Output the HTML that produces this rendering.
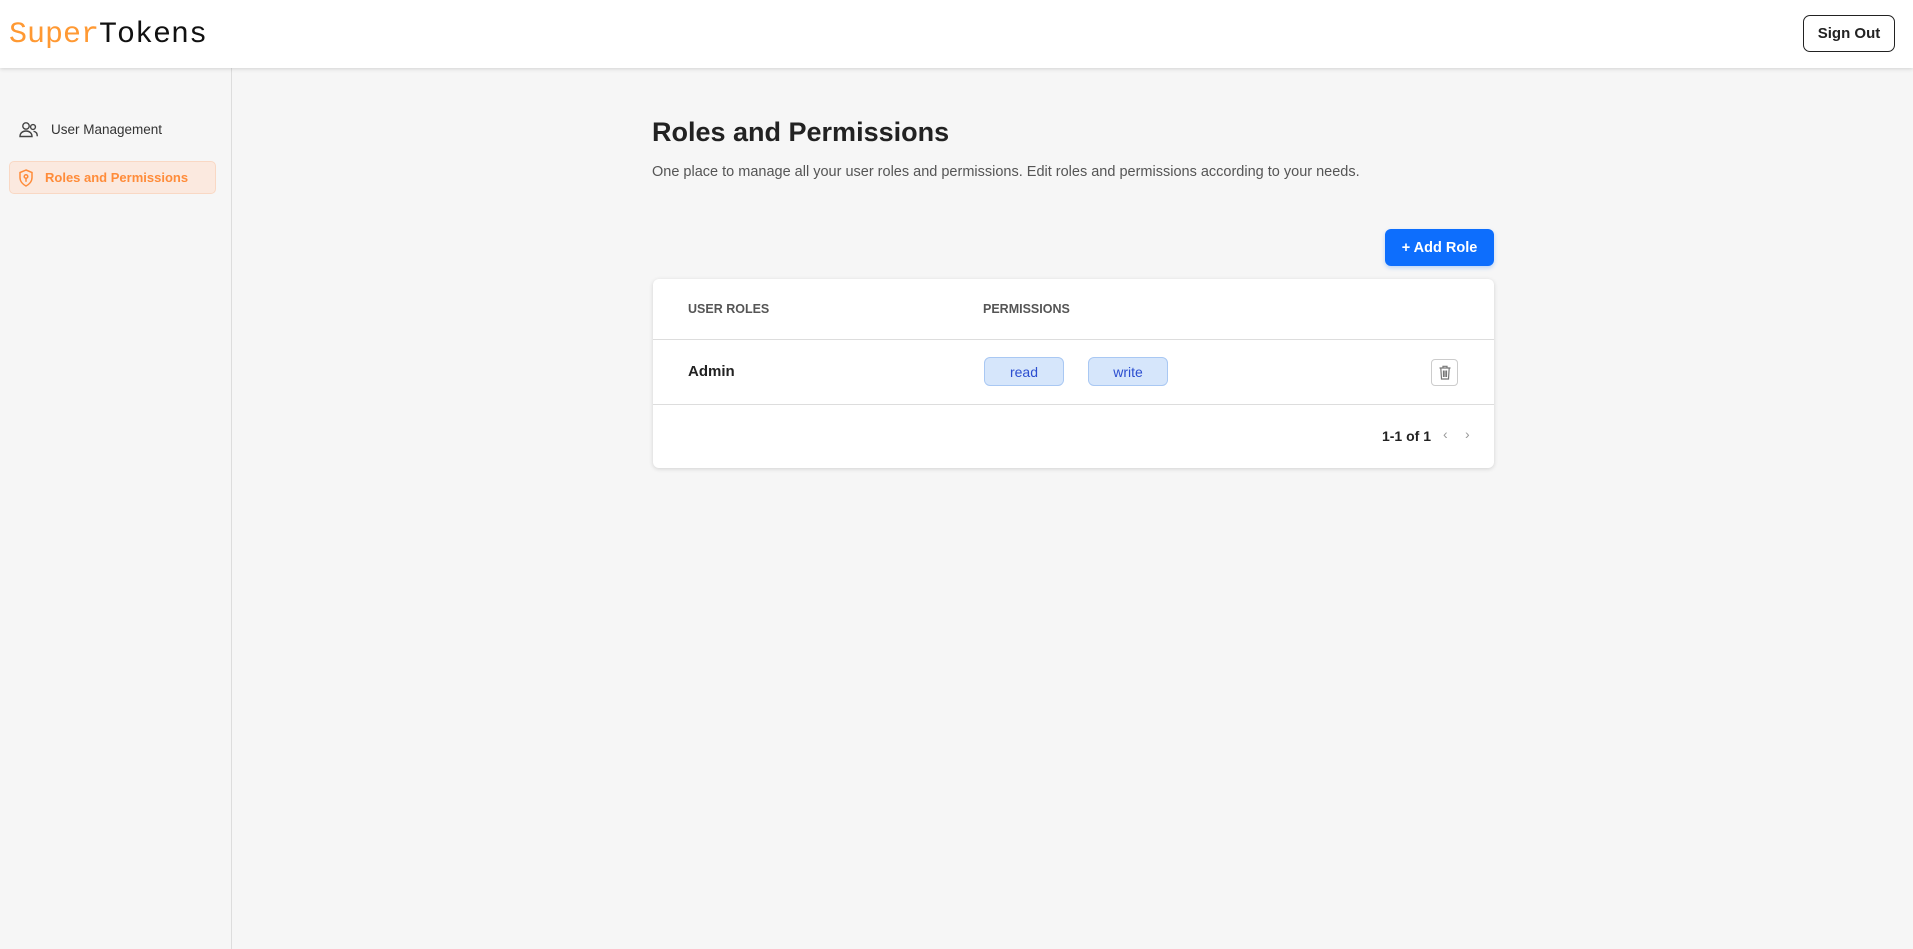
<!DOCTYPE html>
<html><head><meta charset="utf-8"><style>
*{box-sizing:border-box;margin:0;padding:0}
body{width:1913px;height:949px;background:#f6f6f6;font-family:"Liberation Sans",sans-serif;position:relative;overflow:hidden;color:#222}
.hdr{position:absolute;left:0;top:0;width:1913px;height:68px;background:#fff;box-shadow:0 1px 4px rgba(0,0,0,.15);z-index:2}
.logo{position:absolute;left:9px;top:17px;font-family:"Liberation Mono",monospace;font-size:30px;line-height:36px}
.logo .o{color:#ff9933}.logo .b{color:#111}
.so{position:absolute;left:1803px;top:15px;width:92px;height:37px;border:1px solid #222;border-radius:7px;font-size:15px;font-weight:bold;display:flex;align-items:center;justify-content:center;color:#222}
.side{position:absolute;left:0;top:68px;width:232px;height:881px;border-right:1px solid #ddd}
.um{position:absolute;left:19px;top:121px;display:flex;align-items:center;font-size:13.5px;color:#333}
.rp{position:absolute;left:9px;top:161px;width:207px;height:33px;background:#fbe9df;border:1px solid #f9d8c4;border-radius:5px;display:flex;align-items:center;padding-left:8px;font-size:13px;font-weight:bold;color:#ff8c3a}
h1{position:absolute;left:652px;top:117px;font-size:27px;font-weight:bold;color:#222}
.sub{position:absolute;left:652px;top:164px;font-size:14.5px;color:#555}
.add{position:absolute;left:1385px;top:229px;width:109px;height:37px;background:#0d6efd;border-radius:6px;color:#fff;font-weight:bold;font-size:14.5px;display:flex;align-items:center;justify-content:center;box-shadow:0 2px 4px rgba(13,110,253,.25)}
.card{position:absolute;left:653px;top:279px;width:841px;height:189px;background:#fff;border-radius:6px;box-shadow:0 1px 4px rgba(0,0,0,.15)}
.th{position:absolute;top:23px;font-size:12.5px;font-weight:bold;color:#555}
.l1{position:absolute;left:0;top:60px;width:100%;border-top:1px solid #ddd}
.l2{position:absolute;left:0;top:125px;width:100%;border-top:1px solid #ddd}
.admin{position:absolute;left:35px;top:84px;font-size:15px;font-weight:bold;color:#222}
.chip{position:absolute;top:78px;width:80px;height:29px;background:#d6e6fb;border:1px solid #a9c8f3;border-radius:6px;color:#2c4ed0;font-size:14px;display:flex;align-items:center;justify-content:center}
.trash{position:absolute;left:778px;top:80px;width:27px;height:27px;border:1px solid #ccc;border-radius:4px;display:flex;align-items:center;justify-content:center}
.pg{position:absolute;right:63px;top:149px;font-size:14px;font-weight:bold;color:#222}
.ar{position:absolute;top:147px;font-size:14px;color:#999}
</style></head><body>
<div class="hdr"><div class="logo"><span class="o">Super</span><span class="b">Tokens</span></div><div class="so">Sign Out</div></div>
<div class="side"></div>
<div class="um"><svg width="19" height="17" viewBox="0 0 19 17" fill="none" stroke="#444" stroke-width="1.4"><circle cx="7" cy="5" r="3.2"/><path d="M1 15.5c0-3.5 2.7-5.5 6-5.5s6 2 6 5.5z"/><circle cx="14" cy="6" r="2.4"/><path d="M14.5 10.3c2.3.3 3.8 2 3.8 5"/></svg><span style="margin-left:13px">User Management</span></div>
<div class="rp"><svg width="16" height="18" viewBox="0 0 16 18" fill="none" stroke="#ff8c3a" stroke-width="1.5"><path d="M8 1l6 2.5v5c0 4-3 7-6 8.5-3-1.5-6-4.5-6-8.5v-5z"/><circle cx="8" cy="7.5" r="1.8"/><path d="M8 9.3v3.5"/></svg><span style="margin-left:11px">Roles and Permissions</span></div>
<h1>Roles and Permissions</h1>
<div class="sub">One place to manage all your user roles and permissions. Edit roles and permissions according to your needs.</div>
<div class="add">+ Add Role</div>
<div class="card">
<div class="th" style="left:35px">USER ROLES</div>
<div class="th" style="left:330px">PERMISSIONS</div>
<div class="l1"></div>
<div class="admin">Admin</div>
<div class="chip" style="left:331px">read</div>
<div class="chip" style="left:435px">write</div>
<div class="trash"><svg width="12" height="15" viewBox="0 0 12 15" fill="none" stroke="#777" stroke-width="1.2"><path d="M0.5 3h11M4 3V1.3h4V3M1.8 3l.7 11h7l.7-11M4.5 5.5v6.5M6 5.5v6.5M7.5 5.5v6.5"/></svg></div>
<div class="l2"></div>
<div class="pg">1-1 of 1</div>
<div class="ar" style="left:790px">‹</div>
<div class="ar" style="left:812px">›</div>
</div>
</body></html>
